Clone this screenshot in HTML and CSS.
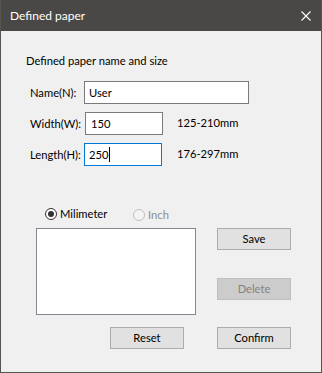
FILE: index.html
```html
<!DOCTYPE html>
<html>
<head>
<meta charset="utf-8">
<link rel="stylesheet" href="styles.css">
</head>
<body>
<div class="window">
  <div class="titlebar">
    <span class="title">Defined paper</span>
    <svg class="close" width="10" height="10" viewBox="0 0 10 10"><path d="M0.5 0.5 L9.5 9.5 M9.5 0.5 L0.5 9.5" stroke="#ffffff" stroke-width="1.1" fill="none"/></svg>
  </div>
  <div class="content">
    <div class="heading">Defined paper name and size</div>
    <div class="form">
      <label class="lbl">Name(N):</label>
      <div class="field name"><span>User</span></div>
      <label class="lbl">Width(W):</label>
      <div class="field size w"><span>150</span></div>
      <span class="range">125-210mm</span>
      <label class="lbl">Length(H):</label>
      <div class="field size focus"><span>250</span><i class="caret"></i></div>
      <span class="range">176-297mm</span>
    </div>
    <div class="radios">
      <div class="radio checked"><span class="dot"></span><span>Milimeter</span></div>
      <div class="radio disabled"><span class="dot"></span><span>Inch</span></div>
    </div>
    <div class="lower">
      <div class="listbox"></div>
      <div class="btncol">
        <div class="btn">Save</div>
        <div class="btn disabled del">Delete</div>
      </div>
    </div>
    <div class="bottom">
      <div class="btn">Reset</div>
      <div class="btn">Confirm</div>
    </div>
  </div>
</div>
</body>
</html>
```
FILE: styles.css
```css
html, body {
  margin: 0;
  padding: 0;
  background: #f0f0f0;
}
body {
  font-family: Lato, "Noto Sans", sans-serif;
  font-size: 11.2px;
  color: #000;
}
.window {
  width: 322px;
  height: 373px;
  box-sizing: border-box;
  border: 1px solid #555453;
  background: #f0f0f0;
}
.titlebar {
  height: 30px;
  margin-top: -1px;
  padding-top: 1px;
  background: #4a4846;
  display: flex;
  align-items: center;
  justify-content: space-between;
  padding-left: 9px;
  padding-right: 10px;
}
.title {
  color: #ffffff;
  font-size: 12px;
  line-height: 16px;
}
.close {
  display: block;
}
.content {
  padding-top: 22px;
  padding-left: 25px;
}
.heading {
  line-height: 16px;
  height: 16px;
}
.form {
  margin-top: 12px;
  margin-left: 4px;
  display: grid;
  grid-template-columns: 54px 78px auto;
  grid-auto-rows: 23px;
  row-gap: 8px;
  align-items: center;
}
.lbl {
  line-height: 16px;
  white-space: nowrap;
}
.field {
  box-sizing: border-box;
  height: 23px;
  border: 1px solid #7a7a7a;
  background: #fff;
  display: flex;
  align-items: center;
  padding-left: 4px;
}
.field.name {
  grid-column: 2 / 4;
  width: 165px;
}
.field.size {
  width: 78px;
}
.field.w {
  margin-left: 1px;
  padding-left: 5px;
}
.field.focus {
  border-color: #0078d7;
}
.caret {
  display: inline-block;
  width: 1px;
  height: 15px;
  background: #000;
  margin-left: 1px;
}
.range {
  margin-left: 15px;
  line-height: 16px;
  margin-top: -2px;
}
.radios {
  margin-top: 40px;
  margin-left: 19px;
  display: flex;
  height: 16px;
}
.radio {
  display: flex;
  align-items: center;
  gap: 3px;
  line-height: 16px;
}
.radio.checked {
  width: 88px;
}
.radio .dot {
  box-sizing: border-box;
  width: 12px;
  height: 12px;
  border-radius: 50%;
  border: 1px solid #333;
  background: #fff;
  position: relative;
}
.radio.checked .dot::after {
  content: "";
  position: absolute;
  left: 2px;
  top: 2px;
  width: 6px;
  height: 6px;
  border-radius: 50%;
  background: #333;
}
.radio.disabled {
  margin-top: 2px;
  color: #8d8d8d;
}
.radio.disabled .dot {
  border-color: #c0c0c0;
  background: #f4f4f4;
}
.lower {
  margin-top: 6px;
  margin-left: 10px;
  display: flex;
  align-items: flex-start;
}
.listbox {
  box-sizing: border-box;
  width: 160px;
  height: 87px;
  border: 1px solid #828790;
  background: #fff;
}
.btncol {
  margin-left: 21px;
  display: flex;
  flex-direction: column;
  gap: 28px;
}
.btn {
  box-sizing: border-box;
  width: 74px;
  height: 22px;
  border: 1px solid #adadad;
  background: #e1e1e1;
  display: flex;
  align-items: center;
  justify-content: center;
  line-height: 16px;
}
.btn.disabled {
  background: #cccccc;
  border-color: #bfbfbf;
  color: #838383;
}
.bottom {
  margin-top: 12px;
  margin-left: 84px;
  display: flex;
  gap: 33px;
}
```
